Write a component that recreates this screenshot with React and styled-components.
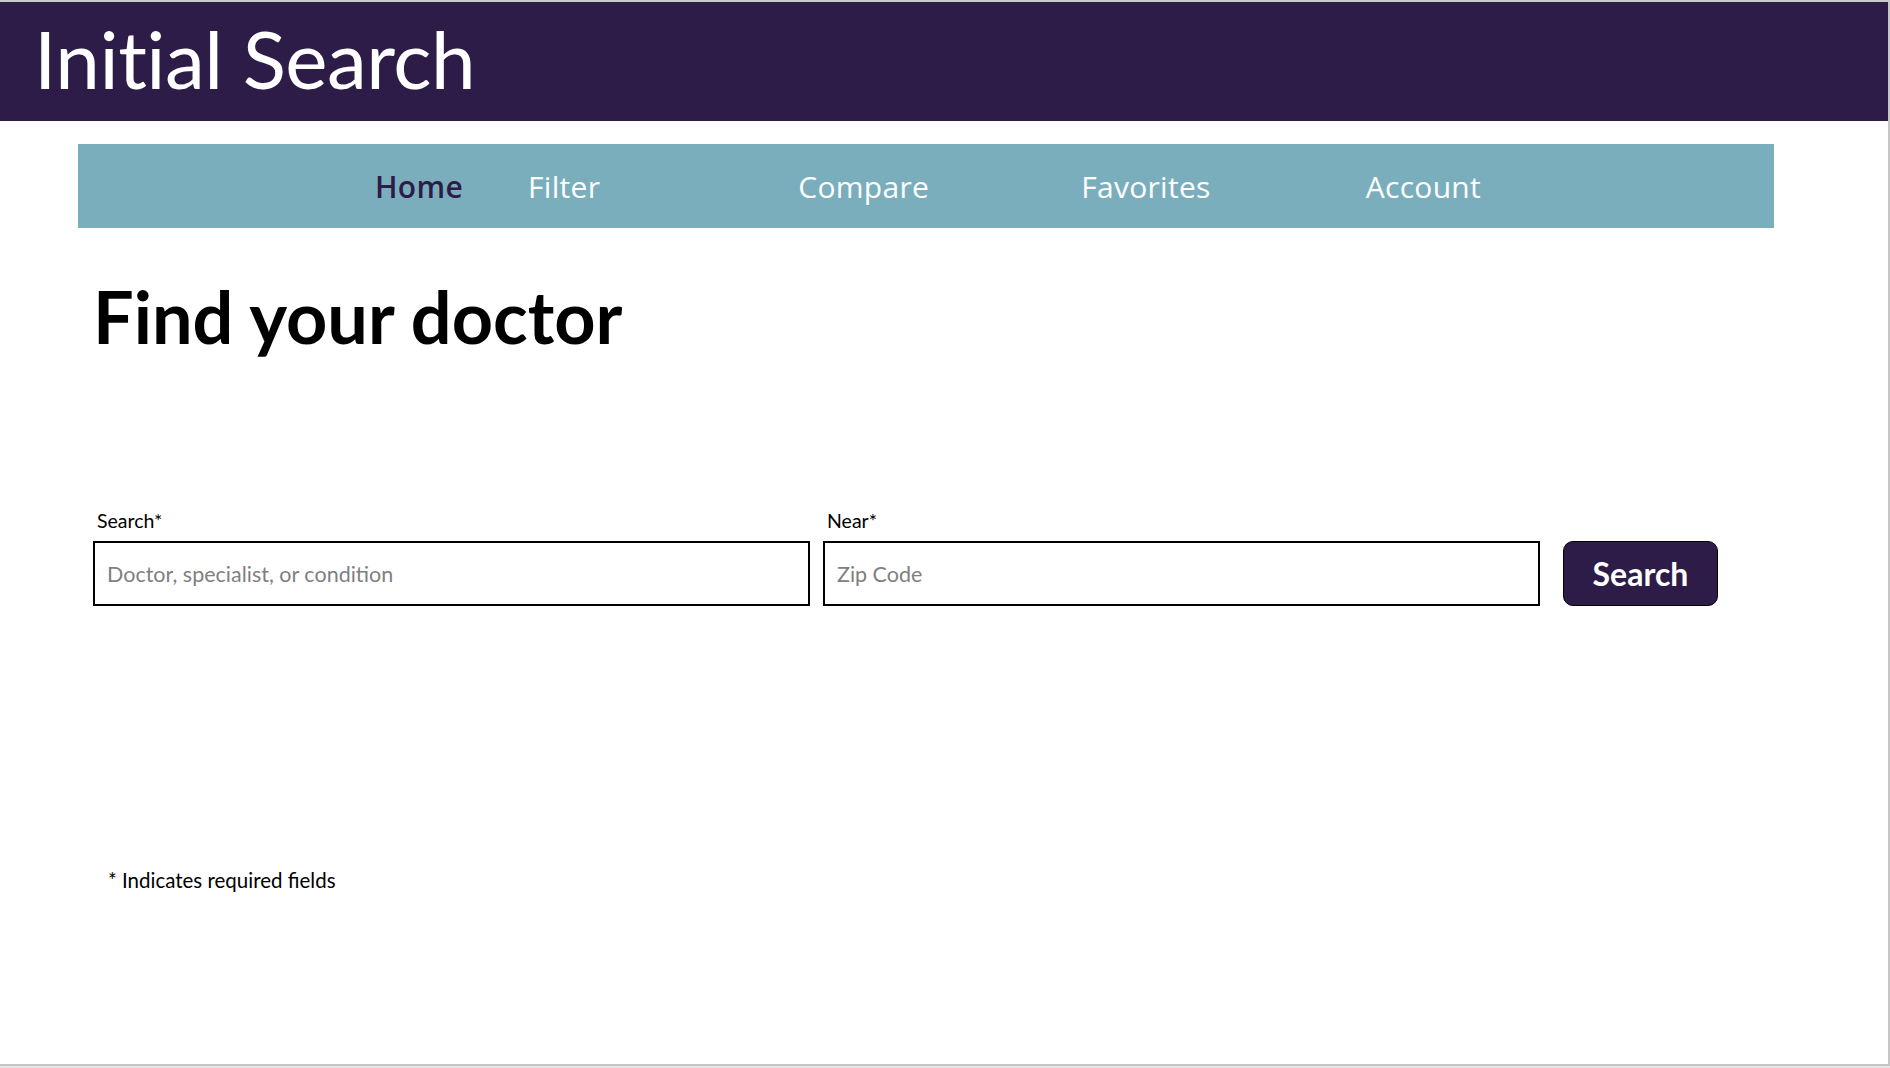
import React from "react";
import styled, { createGlobalStyle } from "styled-components";

const GlobalStyle = createGlobalStyle`
  html, body {
    margin: 0;
    padding: 0;
    background: #e6e6e6;
  }
  * {
    box-sizing: border-box;
  }
`;

const Stage = styled.div`
  width: 1890px;
  height: 1068px;
  background: #e6e6e6;
  padding-top: 2px;
  background-image: linear-gradient(#c9c9c9, #c9c9c9);
  background-size: 100% 2px;
  background-repeat: no-repeat;
`;

const Slide = styled.div`
  width: 1890px;
  height: 1064px;
  background: #ffffff;
  border-right: 2px solid #c6c6c6;
  border-bottom: 2px solid #c6c6c6;
  display: flex;
  flex-direction: column;
  font-family: Lato, "Open Sans", sans-serif;
`;

const Header = styled.header`
  height: 119px;
  background: #2e1c48;
  display: flex;
  align-items: center;
  padding: 0 0 8px 34px;
`;

const Title = styled.h1`
  margin: 0;
  color: #ffffff;
  font-family: Lato, sans-serif;
  font-weight: 400;
  font-size: 80px;
  line-height: 1;
  letter-spacing: -0.5px;
`;

const NavBar = styled.nav`
  margin: 23px 0 0 78px;
  width: 1696px;
  height: 84px;
  background: #7baebd;
  display: flex;
  align-items: center;
  padding: 2px 0 0 297px;
`;

const NavLink = styled.a`
  margin-left: ${(p) => p.$offset || 0}px;
  font-family: "Open Sans", sans-serif;
  font-size: 30px;
  line-height: 1;
  letter-spacing: 0.3px;
  font-weight: ${(p) => (p.$active ? 600 : 400)};
  color: ${(p) => (p.$active ? "#2e1c48" : "#ffffff")};
  text-decoration: none;
  cursor: pointer;
`;

const Heading = styled.h2`
  margin: 52px 0 0 93px;
  font-family: Lato, sans-serif;
  font-weight: 700;
  font-size: 72px;
  line-height: 72px;
  color: #000000;
`;

const FormRow = styled.div`
  margin: 157px 0 0 93px;
  display: flex;
  align-items: flex-end;
`;

const Field = styled.div`
  width: 717px;
  margin-right: ${(p) => p.$space || 0}px;
  display: flex;
  flex-direction: column;
`;

const Label = styled.label`
  font-family: Lato, sans-serif;
  font-size: 19.5px;
  line-height: 23px;
  color: #000000;
  margin: 0 0 9px 4px;
`;

const Input = styled.input`
  height: 65px;
  width: 100%;
  border: 2px solid #000000;
  padding: 0 12px;
  font-family: Lato, sans-serif;
  font-size: 21.5px;
  color: #000000;
  outline: none;
  background: #ffffff;
  &::placeholder {
    color: #7f7f7f;
  }
`;

const SearchButton = styled.button`
  margin-left: 10px;
  width: 155px;
  height: 65px;
  background: #2e1c48;
  border: 1.5px solid #000000;
  border-radius: 10px;
  color: #ffffff;
  font-family: Lato, sans-serif;
  font-weight: 700;
  font-size: 32px;
  cursor: pointer;
`;

const Footnote = styled.p`
  margin: 262px 0 0 108px;
  font-family: Lato, sans-serif;
  font-size: 20.5px;
  line-height: 24px;
  color: #000000;
`;

const navItems = [
  { label: "Home", active: true, offset: 0 },
  { label: "Filter", offset: 65 },
  { label: "Compare", offset: 198 },
  { label: "Favorites", offset: 152 },
  { label: "Account", offset: 155 },
];

export default function App() {
  return (
    <>
      <GlobalStyle />
      <Stage>
        <Slide>
          <Header>
            <Title>Initial Search</Title>
          </Header>
          <NavBar>
            {navItems.map((item) => (
              <NavLink key={item.label} $active={item.active} $offset={item.offset}>
                {item.label}
              </NavLink>
            ))}
          </NavBar>
          <Heading>Find your doctor</Heading>
          <FormRow>
            <Field $space={13}>
              <Label>Search*</Label>
              <Input placeholder="Doctor, specialist, or condition" />
            </Field>
            <Field $space={13}>
              <Label>Near*</Label>
              <Input placeholder="Zip Code" />
            </Field>
            <SearchButton>Search</SearchButton>
          </FormRow>
          <Footnote>* Indicates required fields</Footnote>
        </Slide>
      </Stage>
    </>
  );
}
